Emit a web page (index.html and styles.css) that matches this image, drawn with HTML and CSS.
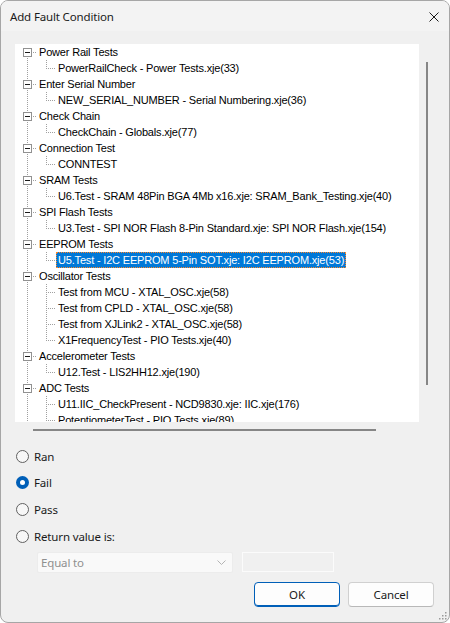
FILE: index.html
```html
<!DOCTYPE html>
<html>
<head>
<meta charset="utf-8">
<link rel="stylesheet" href="styles.css">
</head>
<body>
<div class="window">
  <div class="titlebar">
    <span class="title">Add Fault Condition</span>
    <svg class="close" width="10" height="10" viewBox="0 0 10 10"><path d="M0.5 0.5 L9.5 9.5 M9.5 0.5 L0.5 9.5" stroke="#1a1a1a" stroke-width="1" fill="none"/></svg>
  </div>
  <div class="body">
    <div class="treewrap">
      <div class="tree">
        <div class="row root first"><span class="cell c1"><span class="box"></span></span><span class="label">Power Rail Tests</span></div>
        <div class="row child"><span class="cell c1"></span><span class="cell c2 last"></span><span class="label">PowerRailCheck - Power Tests.xje(33)</span></div>
        <div class="row root"><span class="cell c1"><span class="box"></span></span><span class="label">Enter Serial Number</span></div>
        <div class="row child"><span class="cell c1"></span><span class="cell c2 last"></span><span class="label">NEW_SERIAL_NUMBER - Serial Numbering.xje(36)</span></div>
        <div class="row root"><span class="cell c1"><span class="box"></span></span><span class="label">Check Chain</span></div>
        <div class="row child"><span class="cell c1"></span><span class="cell c2 last"></span><span class="label">CheckChain - Globals.xje(77)</span></div>
        <div class="row root"><span class="cell c1"><span class="box"></span></span><span class="label">Connection Test</span></div>
        <div class="row child"><span class="cell c1"></span><span class="cell c2 last"></span><span class="label">CONNTEST</span></div>
        <div class="row root"><span class="cell c1"><span class="box"></span></span><span class="label">SRAM Tests</span></div>
        <div class="row child"><span class="cell c1"></span><span class="cell c2 last"></span><span class="label">U6.Test - SRAM 48Pin BGA 4Mb x16.xje: SRAM_Bank_Testing.xje(40)</span></div>
        <div class="row root"><span class="cell c1"><span class="box"></span></span><span class="label">SPI Flash Tests</span></div>
        <div class="row child"><span class="cell c1"></span><span class="cell c2 last"></span><span class="label">U3.Test - SPI NOR Flash 8-Pin Standard.xje: SPI NOR Flash.xje(154)</span></div>
        <div class="row root"><span class="cell c1"><span class="box"></span></span><span class="label">EEPROM Tests</span></div>
        <div class="row child"><span class="cell c1"></span><span class="cell c2 last"></span><span class="label selected">U5.Test - I2C EEPROM 5-Pin SOT.xje: I2C EEPROM.xje(53)</span></div>
        <div class="row root"><span class="cell c1"><span class="box"></span></span><span class="label">Oscillator Tests</span></div>
        <div class="row child"><span class="cell c1"></span><span class="cell c2"></span><span class="label">Test from MCU - XTAL_OSC.xje(58)</span></div>
        <div class="row child"><span class="cell c1"></span><span class="cell c2"></span><span class="label">Test from CPLD - XTAL_OSC.xje(58)</span></div>
        <div class="row child"><span class="cell c1"></span><span class="cell c2"></span><span class="label">Test from XJLink2 - XTAL_OSC.xje(58)</span></div>
        <div class="row child"><span class="cell c1"></span><span class="cell c2 last"></span><span class="label">X1FrequencyTest - PIO Tests.xje(40)</span></div>
        <div class="row root"><span class="cell c1"><span class="box"></span></span><span class="label">Accelerometer Tests</span></div>
        <div class="row child"><span class="cell c1"></span><span class="cell c2 last"></span><span class="label">U12.Test - LIS2HH12.xje(190)</span></div>
        <div class="row root"><span class="cell c1"><span class="box"></span></span><span class="label">ADC Tests</span></div>
        <div class="row child"><span class="cell c1"></span><span class="cell c2"></span><span class="label">U11.IIC_CheckPresent - NCD9830.xje: IIC.xje(176)</span></div>
        <div class="row child"><span class="cell c1"></span><span class="cell c2"></span><span class="label">PotentiometerTest - PIO Tests.xje(89)</span></div>
      </div>
      <div class="vscroll"><div class="vthumb"></div></div>
      <div class="hscroll"><div class="hthumb"></div></div>
    </div>

    <div class="radios">
      <div class="radio"><span class="dot"></span><span class="rlabel">Ran</span></div>
      <div class="radio"><span class="dot checked"></span><span class="rlabel">Fail</span></div>
      <div class="radio"><span class="dot"></span><span class="rlabel">Pass</span></div>
      <div class="radio"><span class="dot"></span><span class="rlabel">Return value is:</span></div>
    </div>

    <div class="valuerow">
      <div class="combo"><span class="combotext">Equal to</span>
        <svg class="chev" width="9" height="5" viewBox="0 0 9 5"><path d="M0.5 0.5 L4.5 4.5 L8.5 0.5" stroke="#b4b4b4" stroke-width="1" fill="none"/></svg>
      </div>
      <div class="textbox"></div>
    </div>

    <div class="buttons">
      <div class="btn ok">OK</div>
      <div class="btn">Cancel</div>
    </div>
  </div>
  <svg class="grip" width="8" height="8" viewBox="0 0 8 8">
    <rect x="6" y="0" width="1.5" height="1.5" fill="#9a9a9a"/>
    <rect x="3" y="3" width="1.5" height="1.5" fill="#9a9a9a"/>
    <rect x="6" y="3" width="1.5" height="1.5" fill="#9a9a9a"/>
    <rect x="0" y="6" width="1.5" height="1.5" fill="#9a9a9a"/>
    <rect x="3" y="6" width="1.5" height="1.5" fill="#9a9a9a"/>
    <rect x="6" y="6" width="1.5" height="1.5" fill="#9a9a9a"/>
  </svg>
</div>
</body>
</html>
```

FILE: styles.css
```css
html, body {
  margin: 0;
  padding: 0;
  background: #ffffff;
}
body {
  width: 450px;
  height: 623px;
  overflow: hidden;
  font-family: "Noto Sans", "Liberation Sans", sans-serif;
  font-size: 11.5px;
  letter-spacing: -0.15px;
  color: #1a1a1a;
}
.window {
  position: relative;
  box-sizing: border-box;
  width: 450px;
  height: 623px;
  border: 1px solid #a6a6a6;
  border-radius: 8px;
  background: #f0f0f0;
  overflow: hidden;
  display: flex;
  flex-direction: column;
}
.titlebar {
  height: 30px;
  flex: none;
  background: #f3f3f3;
  display: flex;
  align-items: center;
  justify-content: space-between;
  padding: 0 10px 0 9px;
}
.title {
  color: #1a1a1a;
}
.close {
  display: block;
  margin-top: 1px;
}
.body {
  flex: 1;
  display: flex;
  flex-direction: column;
  padding: 13px 0 0 14px;
}
.treewrap {
  display: grid;
  grid-template-columns: 404px 26px;
  grid-template-rows: 378px 15px;
  width: 430px;
}
.tree {
  background: #ffffff;
  overflow: hidden;
  padding-left: 3px;
  font-family: "Liberation Sans", Arial, sans-serif;
  font-size: 11px;
  letter-spacing: -0.18px;
  color: #000;
}
.row {
  height: 16px;
  display: flex;
  align-items: stretch;
  white-space: nowrap;
}
.cell {
  position: relative;
  width: 19px;
  flex: none;
}
/* vertical dotted line */
.cell::before {
  content: "";
  position: absolute;
  left: 9px;
  top: 0;
  width: 1px;
  height: 16px;
  background-image: linear-gradient(to bottom, #a0a0a0 50%, transparent 50%);
  background-size: 1px 2px;
}
.root .c1::after, .c2::after {
  content: "";
  position: absolute;
  left: 10px;
  top: 8px;
  width: 9px;
  height: 1px;
  background-image: linear-gradient(to right, #a0a0a0 50%, transparent 50%);
  background-size: 2px 1px;
  background-position: 1px 0;
}
.first .c1::before {
  top: 8px;
  height: 8px;
}
.c2.last::before {
  height: 9px;
}
.box {
  position: absolute;
  left: 5px;
  top: 4px;
  width: 7px;
  height: 7px;
  border: 1px solid #919191;
  background: #ffffff;
  z-index: 1;
}
.box::after {
  content: "";
  position: absolute;
  left: 1px;
  top: 3px;
  width: 5px;
  height: 1px;
  background: #1a1a1a;
}
.label {
  padding: 0 2px;
  line-height: 17px;
  height: 16px;
  box-sizing: border-box;
}
.label.selected {
  background: #0078d7;
  color: #ffffff;
  border: 1px dotted #ff8728;
  padding: 0 1px;
  line-height: 15px;
}
.vscroll {
  grid-row: 1 / 3;
  grid-column: 2;
  padding: 18px 0 0 7px;
}
.vthumb {
  width: 2px;
  height: 323px;
  background: #868686;
}
.hscroll {
  grid-row: 2;
  grid-column: 1;
  padding: 7px 0 0 18px;
}
.hthumb {
  width: 343px;
  height: 2px;
  background: #868686;
}
.radios {
  margin-top: 6px;
  display: flex;
  flex-direction: column;
}
.radio {
  height: 26.67px;
  display: flex;
  align-items: center;
  padding-left: 1px;
}
.dot {
  box-sizing: border-box;
  width: 13px;
  height: 13px;
  border-radius: 50%;
  border: 1px solid #616161;
  background: #f7f7f7;
  position: relative;
  flex: none;
}
.dot.checked {
  border: none;
  background: #005fb8;
}
.dot.checked::after {
  content: "";
  position: absolute;
  left: 4px;
  top: 4px;
  width: 5px;
  height: 5px;
  border-radius: 50%;
  background: #ffffff;
}
.rlabel {
  margin-left: 5px;
  color: #1a1a1a;
}
.valuerow {
  margin-top: 2px;
  display: flex;
  align-items: flex-start;
  padding-left: 22px;
}
.combo {
  box-sizing: border-box;
  width: 196px;
  height: 21px;
  background: #f9f9f9;
  border: 1px solid #ececec;
  border-radius: 2px;
  display: flex;
  align-items: center;
  justify-content: space-between;
  padding: 0 6px 0 3px;
}
.combotext {
  color: #8f8f8f;
}
.chev {
  display: block;
}
.textbox {
  box-sizing: border-box;
  width: 92px;
  height: 20px;
  margin-left: 9px;
  border: 1px solid #fbfbfb;
  background: #f0f0f0;
}
.buttons {
  margin-top: 9px;
  display: flex;
  justify-content: flex-end;
  gap: 8px;
  padding-right: 15px;
}
.btn {
  box-sizing: border-box;
  width: 86px;
  height: 25px;
  border: 1px solid #d0d0d0;
  border-bottom-color: #b8b8b8;
  border-radius: 4px;
  background: #fdfdfd;
  display: flex;
  align-items: center;
  justify-content: center;
  color: #1a1a1a;
}
.btn.ok {
  border: 1px solid #005fb8;
  box-shadow: inset 0 -1px 0 #005fb8;
}
.grip {
  position: absolute;
  right: 2px;
  bottom: 2px;
}
```
